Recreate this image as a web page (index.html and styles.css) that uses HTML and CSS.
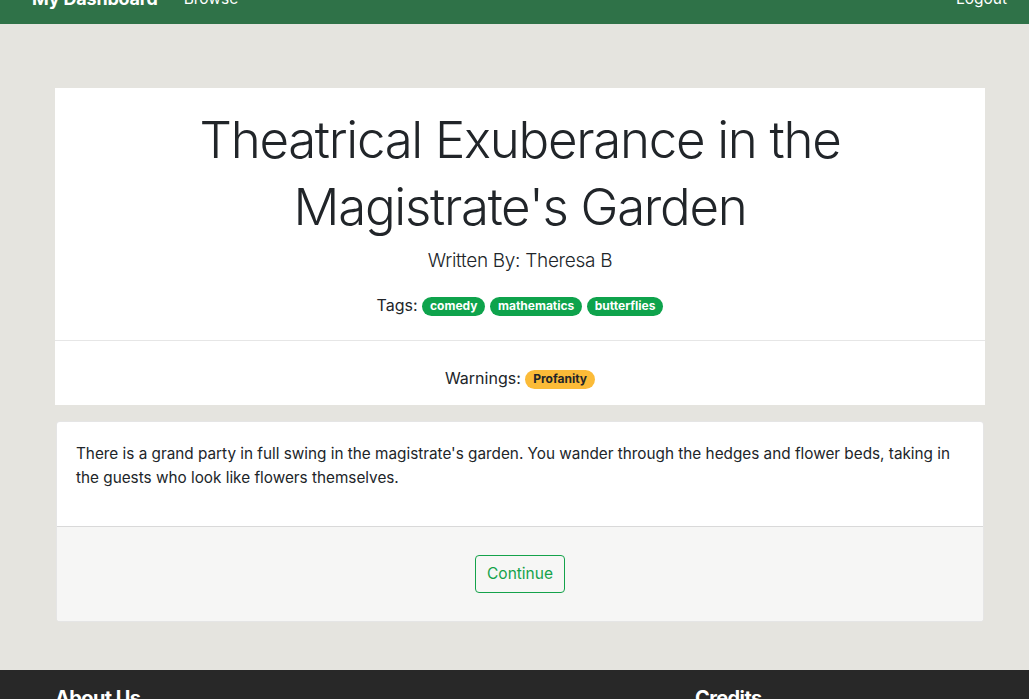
FILE: index.html
```html
<!DOCTYPE html>
<html lang="en">
<head>
<meta charset="utf-8">
<title>Theatrical Exuberance in the Magistrate's Garden</title>
<link rel="stylesheet" href="styles.css">
</head>
<body>
<nav class="navbar">
  <div class="nav-left">
    <a class="brand" href="#">My Dashboard</a>
    <a class="nav-link" href="#">Browse</a>
  </div>
  <a class="nav-link" href="#">Logout</a>
</nav>

<main class="container">
  <section class="story-head">
    <div class="head-top">
      <h1 class="title">Theatrical Exuberance in the Magistrate's Garden</h1>
      <p class="author">Written By: Theresa B</p>
      <p class="tags">Tags: <span class="badge badge-success">comedy</span> <span class="badge badge-success">mathematics</span> <span class="badge badge-success">butterflies</span></p>
    </div>
    <div class="head-bottom">
      <p class="warnings">Warnings: <span class="badge badge-warning">Profanity</span></p>
    </div>
  </section>

  <section class="card">
    <div class="card-body">
      <p>There is a grand party in full swing in the magistrate's garden. You wander through the hedges and flower beds, taking in the guests who look like flowers themselves.</p>
    </div>
    <div class="card-footer">
      <button class="btn-outline" type="button">Continue</button>
    </div>
  </section>
</main>

<footer class="site-footer">
  <div class="footer-grid">
    <h5>About Us</h5>
    <h5>Credits</h5>
  </div>
</footer>
</body>
</html>
```

FILE: styles.css
```css
* { box-sizing: border-box; }

html, body {
  margin: 0;
  padding: 0;
}

body {
  background: #e5e4df;
  color: #212529;
  font-family: "Inter", "Liberation Sans", sans-serif;
  font-size: 16px;
  line-height: 1.5;
  margin-top: -33px;
}

.navbar {
  height: 57px;
  background: #2f7248;
  display: flex;
  align-items: center;
  justify-content: space-between;
  padding: 6px 22px 0 32px;
}

.nav-left {
  display: flex;
  align-items: center;
  gap: 26px;
}

.navbar a {
  color: #fff;
  text-decoration: none;
}

.brand {
  font-size: 18px;
  font-weight: 700;
  line-height: 30px;
  letter-spacing: -0.2px;
}

.nav-link {
  font-size: 15.5px;
}

.container {
  width: 930px;
  margin: 64px 0 0 55px;
}

.story-head {
  background: #fff;
  text-align: center;
}

.head-top {
  padding: 18px 20px 23px;
  border-bottom: 1px solid #e6e6e6;
}

.title {
  margin: 0 auto;
  max-width: 820px;
  font-size: 51px;
  font-weight: 300;
  line-height: 67px;
  letter-spacing: -1.3px;
}

.author {
  margin: 6px 0 0;
  font-size: 19px;
  font-weight: 300;
  line-height: 30px;
  letter-spacing: -0.3px;
}

.tags {
  margin: 17px 0 0;
  line-height: 24px;
}

.head-bottom {
  padding: 25px 0 15px;
}

.warnings {
  margin: 0;
  line-height: 24px;
}

.badge {
  display: inline-block;
  font-size: 12px;
  font-weight: 700;
  line-height: 1;
  padding: 3px 8px 4px;
  border-radius: 10px;
  vertical-align: 1px;
}

.badge-success {
  background: #0ea34c;
  color: #fff;
}

.badge-warning {
  background: #fbbb38;
  color: #212529;
}

.card {
  margin-top: 16px;
  background: #fff;
  border: 1px solid rgba(0,0,0,0.1);
  border-radius: 4px;
  overflow: hidden;
  margin-left: 1px;
  margin-right: 1px;
}

.card-body {
  padding: 20px 19px;
}

.card-body p {
  margin: 0 0 16px;
  font-size: 15.3px;
  line-height: 24px;
}

.card-footer {
  background: #f6f6f5;
  border-top: 1px solid #d9d9d9;
  padding: 28px 20px 28px;
  text-align: center;
}

.btn-outline {
  font-family: inherit;
  font-size: 15.5px;
  line-height: 24px;
  padding: 6px 11px;
  color: #14a24a;
  background: transparent;
  border: 1px solid #14a24a;
  border-radius: 4px;
  cursor: pointer;
}

.site-footer {
  margin-top: 48px;
  background: #282828;
  color: #fff;
  padding: 16px 0 40px;
}

.footer-grid {
  width: 930px;
  margin-left: 55px;
  display: grid;
  grid-template-columns: 610px 1fr;
  column-gap: 30px;
}

.footer-grid h5 {
  margin: 0;
  font-size: 20px;
  font-weight: 700;
  letter-spacing: -0.6px;
  line-height: 24px;
}
```
